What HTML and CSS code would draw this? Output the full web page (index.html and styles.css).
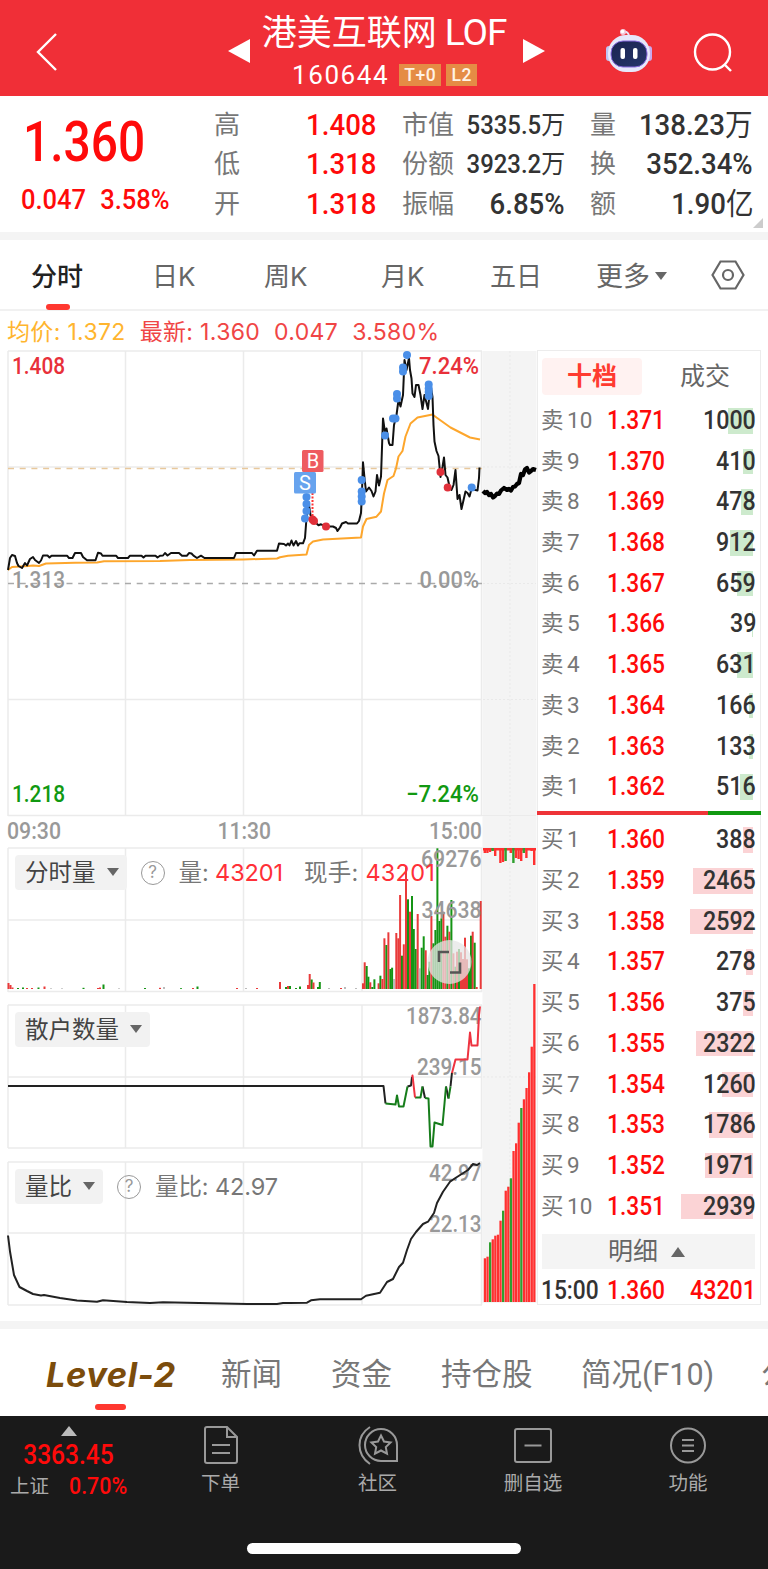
FILE: index.html
```html
<!DOCTYPE html>
<html lang="zh-CN">
<head>
  <meta charset="UTF-8" />
  <meta name="viewport" content="width=device-width, initial-scale=1.0"/>
  <title>港美互联网LOF 160644</title>
  <link rel="stylesheet" href="styles.css">
</head>
<body>
  <header class="topbar">
    <svg class="back" width="24" height="42" viewBox="0 0 24 42"><path d="M21 3 3 21 21 39"/></svg>
    <div class="stock">
      <svg class="arrow" width="22" height="24" viewBox="0 0 22 24"><path d="M22 0V24L0 12z"/></svg>
      <div class="stock-name">
        <h1>港美互联网<span>LOF</span></h1>
        <p><span class="code">160644</span><b class="badge">T+0</b><b class="badge">L2</b></p>
      </div>
      <svg class="arrow" width="22" height="24" viewBox="0 0 22 24"><path d="M0 0V24L22 12z"/></svg>
    </div>
    <svg class="robot" width="48" height="48" viewBox="0 0 48 48">
      <defs>
        <linearGradient id="face" x1="0" y1="0" x2="1" y2="1"><stop offset="0" stop-color="#1b2350"/><stop offset="1" stop-color="#25366b"/></linearGradient>
      </defs>
      <path d="M18 5Q24 4 24 10" fill="none" stroke="#e9e5f8" stroke-width="2"/>
      <circle cx="18" cy="5" r="3" fill="#f3c9dc"/>
      <circle cx="17.500" cy="4.500" r="1.800" fill="#fff"/>
      <rect x="1" y="19" width="6" height="15" rx="3" fill="#bfc6f5"/>
      <rect x="41" y="19" width="6" height="15" rx="3" fill="#c9a9ee"/>
      <rect x="3" y="8" width="42" height="37" rx="18" fill="#e6e8fb"/>
      <rect x="6" y="14" width="36" height="26" rx="12" fill="url(#face)" stroke="#8a6be0" stroke-width="1"/>
      <rect x="15.500" y="21" width="4.500" height="11" rx="2" fill="#fff"/>
      <rect x="28" y="21" width="4.500" height="11" rx="2" fill="#fff"/>
    </svg>
    <svg class="search" width="42" height="42" viewBox="0 0 42 42"><circle cx="20.500" cy="20" r="17.500"/><path d="M33 33l6 6"/></svg>
  </header>

  <section class="quote">
    <div class="quote-main">
      <strong>1.360</strong>
      <p><span>0.047</span><span>3.58%</span></p>
    </div>
    <dl class="stats s1">
      <div><dt>高</dt><dd class="up">1.408</dd></div>
      <div><dt>低</dt><dd class="up">1.318</dd></div>
      <div><dt>开</dt><dd class="up">1.318</dd></div>
    </dl>
    <dl class="stats s2">
      <div><dt>市值</dt><dd class="small">5335.5<i>万</i></dd></div>
      <div><dt>份额</dt><dd class="small">3923.2<i>万</i></dd></div>
      <div><dt>振幅</dt><dd>6.85%</dd></div>
    </dl>
    <dl class="stats s3">
      <div><dt>量</dt><dd>138.23<i>万</i></dd></div>
      <div><dt>换</dt><dd>352.34%</dd></div>
      <div><dt>额</dt><dd>1.90<i>亿</i></dd></div>
    </dl>
    <span class="corner"></span>
  </section>

  <nav class="periods">
    <a class="active">分时</a>
    <a>日K</a>
    <a>周K</a>
    <a>月K</a>
    <a>五日</a>
    <a>更多<span class="down"></span></a>
    <svg width="34" height="30" viewBox="0 0 34 30"><path d="M9.500 1.500h15L32.500 15l-8 13.500h-15L1.500 15z"/><circle cx="17" cy="15" r="5"/></svg>
  </nav>

  <p class="info"><span class="avg">均价: 1.372</span><span>最新: 1.360</span><span>0.047</span><span>3.580%</span></p>

  <main class="market">
    <div class="charts">
      <svg class="price" width="482" height="497" viewBox="0 350 482 497">
        <path class="grid" d="M8 351H482M8 467H482M8 699.500H482M8 815.500H482M8 351V816M125.500 351V816M243.500 351V816M362 351V816M481.500 351V816"/>
        <path class="dash last" d="M8 468.500H482"/>
        <path class="dash" d="M8 583.500H482"/>
        <polyline class="avg-line" points="8,570 12,567 28,566 33,565.500 39,566 46,563.500 75,562.700 97,562.500 104,561.300 160,561 190,560 243,559.500 277,558.500 280,557.300 288,555.700 306.500,554.500 309,545 313,541.500 323,539.500 361,537.500 363,526.500 366.500,519 376.500,516.700 381,511.500 384,493.500 387.500,480 393.500,476 396,468.500 398.500,456.500 402.500,451 405.500,436.500 410.500,423.500 417.500,417.500 432.500,414.500 436.500,417.500 450.500,427.500 470,437.500 480,439.500"/>
        <polyline class="line" points="8,570 10,558 12,555 15,556 17,563 18.500,566 22,568 25,563 27,565.500 30,559 33,557 35,560 39,563 41,560.500 43,555.500 47.500,555.500 49.500,557.500 51.500,555.700 67,555.700 69,558 72.500,558 75,553 81,553 83,557 87,560.300 95.500,560.300 98,552.700 101,553.500 102.500,555.700 116,555.700 118,558 128,558 130,555.700 141.500,555.700 143.500,557.500 145.500,555.700 155.500,555.700 157.500,557.500 160,555.700 163,555.500 165,553 167.500,555.500 171,553 179,553 182,555.700 187,555.700 189,553 191.500,553.500 193.500,555.700 197,558 201,555.700 204.500,558 234,558 236,553 252,553 254,555.500 257,550.700 277,550.700 279,543.500 284,544 286,545.500 288,543.500 289.500,545.500 291.500,540.500 293.500,545.500 296,541 298,545.500 299.500,543.300 303,543.300 305,538 306.500,518 308.500,502 310.500,515 313,519.300 316,523 318.500,525.300 321,524.300 326,526.500 333,526.500 336,528 337.500,531 340,527.500 342,523.500 346,522 348,523.500 357,523.500 359,521 361,513 362,491.500 363,462.300 364.500,478 366,491.500 369,487.500 371.500,491 373.500,496.500 375.500,491.500 377,475 379,485.500 381,476.500 383,418.500 385,432.500 386.500,428.500 389,443 390,445 392.500,445 394,425 396.500,415 398.500,400 400.500,406.500 403,395 404.500,360 406.500,370 409,358 410,370 411.500,378.500 412.500,393.500 414.500,397 416,385 418.500,385 420.500,395 422.500,409 424.500,395 428,409 430.500,385 432.500,397 433.500,425 434.500,441.500 436.500,451 438.500,456 440.500,477 442.500,467 444,457.500 445.500,475 447.500,477.500 449.500,486.500 451.500,490 453.500,485 455.500,470 457.500,499 459.500,495 461.500,509 464,498 465.500,491.500 467.500,493 469.500,496.500 471.500,489 477.500,490.500 479,478 479.500,467.500"/>
        <path d="M312.500 472V518" stroke="#f33" stroke-width="2" stroke-dasharray="2 1.500"/>
        <g id="trades"></g>
        <rect x="294" y="472" width="22" height="21.500" rx="1.500" fill="#67a3ee"/>
        <rect x="302" y="450" width="21.500" height="22" rx="1.500" fill="#ee5b60"/>
        <text class="flag" x="305" y="490">S</text>
        <text class="flag" x="313" y="468">B</text>
        <g class="num">
          <text class="up" x="12" y="374" textLength="53" lengthAdjust="spacingAndGlyphs">1.408</text>
          <text class="up" x="419" y="374" textLength="60" lengthAdjust="spacingAndGlyphs">7.24%</text>
          <text x="12" y="587.500" textLength="53" lengthAdjust="spacingAndGlyphs">1.313</text>
          <text x="419.500" y="587.500" textLength="59.500" lengthAdjust="spacingAndGlyphs">0.00%</text>
          <text class="dn" x="12" y="802" textLength="53" lengthAdjust="spacingAndGlyphs">1.218</text>
          <text class="dn" x="406" y="802" textLength="73" lengthAdjust="spacingAndGlyphs">−7.24%</text>
          <text x="7" y="839" textLength="54" lengthAdjust="spacingAndGlyphs">09:30</text>
          <text x="217.500" y="839" textLength="53.500" lengthAdjust="spacingAndGlyphs">11:30</text>
          <text x="429" y="839" textLength="53" lengthAdjust="spacingAndGlyphs">15:00</text>
        </g>
      </svg>

      <div class="panel">
        <svg width="482" height="145" viewBox="0 847 482 145">
          <path class="grid" d="M8 848H482M8 920H482M8 991.500H482M8 848V992M125.500 848V992M243.500 848V992M362 848V992M481.500 848V992"/>
          <g id="volume"></g>
          <g class="num">
            <text x="421" y="867" textLength="60.500" lengthAdjust="spacingAndGlyphs">69276</text>
            <text x="421.500" y="918" textLength="60" lengthAdjust="spacingAndGlyphs">34638</text>
          </g>
          <circle cx="449.500" cy="962" r="22" fill="#e6e6e6" fill-opacity=".75"/>
          <path d="M439 962V952H449M450 972.500H460V962.500" fill="none" stroke="#555" stroke-width="2.600"/>
        </svg>
        <div class="panel-head">
          <button>分时量<span class="down"></span></button>
          <span class="help">?</span>
          <span class="kv">量: <b>43201</b></span>
          <span class="kv second">现手: <b>43201</b></span>
        </div>
      </div>

      <div class="panel">
        <svg width="482" height="145" viewBox="0 1004 482 145">
          <path class="grid" d="M8 1005H482M8 1077H482M8 1148H482M8 1005V1148M125.500 1005V1148M243.500 1005V1148M362 1005V1148M481.500 1005V1148"/>
          <g class="num">
            <text x="406" y="1024" textLength="75.500" lengthAdjust="spacingAndGlyphs">1873.84</text>
            <text x="417" y="1074.500" textLength="64.500" lengthAdjust="spacingAndGlyphs">239.15</text>
          </g>
          <path class="line thin" d="M8 1086H383.500L385.500 1103.500M407.500 1086.500 411 1085.500 412 1077M422.500 1086.500 425 1098M446 1086.500 448.500 1098.500M450.500 1086.500 452 1072.500"/>
          <path class="line thin green" d="M385.500 1103.500 395.500 1104.500 397 1095.500 399 1106.500H403.500L407.500 1086.500M415 1097.500H420.500L422.500 1086.500M425 1098 428.500 1098.500 430.500 1146.500H432.500L434.500 1122.500 442.500 1125 444.500 1103.500 446 1086.500M448.500 1098.500 450.500 1086.500"/>
          <path class="line thin red" d="M412 1077 412.500 1075.500 415 1097.500M452 1073 455.500 1059.500H467.500L470 1032.500 471.500 1045.500H477.500L479 1015 480 1006.500"/>
        </svg>
        <div class="panel-head">
          <button>散户数量<span class="down"></span></button>
        </div>
      </div>

      <div class="panel">
        <svg width="482" height="145" viewBox="0 1161 482 145">
          <path class="grid" d="M8 1162H482M8 1233H482M8 1305H482M8 1162V1305M125.500 1162V1305M243.500 1162V1305M362 1162V1305M481.500 1162V1305"/>
          <g class="num">
            <text x="429" y="1180.500" textLength="52.500" lengthAdjust="spacingAndGlyphs">42.97</text>
            <text x="429" y="1231.500" textLength="52.500" lengthAdjust="spacingAndGlyphs">22.13</text>
          </g>
          <polyline class="line thin" points="8,1235.500 10,1251.500 14,1275 19.500,1287 27,1291 33,1294 41,1295.500 44,1295 60,1298 77,1300.500 97,1301.700 103,1300.300 127,1302 150,1303 163,1302.300 247,1304 277,1304 283,1303 290,1303 307,1302.700 311,1300.300 320,1299.300 361,1299.300 366,1295.700 380,1292.700 387,1282 393,1279 399,1267 403,1262.700 407,1250 411,1239 416,1232 423,1224 428,1221.700 434,1213 437,1203 443,1191.700 450,1181.700 457,1177 468,1170 473,1164 477,1165 480,1163"/>
        </svg>
        <div class="panel-head">
          <button>量比<span class="down"></span></button>
          <span class="help">?</span>
          <span class="kv">量比: 42.97</span>
        </div>
      </div>
    </div>

    <svg class="auction" width="55" height="956" viewBox="482 350 55 956">
      <rect x="482.500" y="351" width="54" height="952" fill="#f4f4f4"/>
      <path d="M510 351V1303M483 467H536M483 583.500H536M483 699.500H536M483 1077H536" stroke="#e9e9e9" stroke-dasharray="2 2"/>
      <path d="M482 815.500H536M482 848H536" stroke="#ebebeb"/>
      <polyline points="483,491 485,493 487,492 489,495 491,494 493,497.500 495,496 497,493.500 499,494 501,490.500 504,488 507,490 509,489 511,490.500 513,487 515,486.500 517,484 519,483 521,474 523,475 525,469.500 527,468 529,472.500 531,471 533,469 536,470" fill="none" stroke="#000" stroke-width="4.200" stroke-linejoin="round"/>
      <g id="auction"></g>
    </svg>

    <aside class="book">
      <div class="book-tabs"><a class="active">十档</a><a>成交</a></div>
      <div id="sells"></div>
      <div class="ratio"><i></i></div>
      <div id="buys"></div>
      <div class="detail">明细<span class="up-tri"></span></div>
      <div class="tick"><span>15:00</span><b>1.360</b><em><u>43201</u></em></div>
    </aside>
  </main>

  <nav class="sections">
    <a class="active">Level-2</a>
    <a>新闻</a>
    <a>资金</a>
    <a>持仓股</a>
    <a>简况(F10)</a>
    <a>公告</a>
  </nav>

  <footer>
    <div class="toolbar">
      <div class="index">
        <span class="up-tri"></span>
        <strong>3363.45</strong>
        <p>上证<b>0.70%</b></p>
      </div>
      <a>
        <svg width="40" height="40" viewBox="0 0 40 40"><path d="M6 2H26L36 12V36a2 2 0 0 1-2 2H6a2 2 0 0 1-2-2V4a2 2 0 0 1 2-2zM26 2V12H36M11 20H29M11 28H29"/></svg>
        下单
      </a>
      <a>
        <svg width="42" height="40" viewBox="0 0 42 40"><path d="M24 4a16 16 0 0 1 16 16V36H24a16 16 0 0 1 0-32z"/><path d="M13 2C-1 11-1 29 13 39"/><path d="M24 10.500l3 6 6.600 1-4.800 4.600 1.200 6.600-6-3.200-6 3.200 1.200-6.600-4.800-4.600 6.600-1z"/></svg>
        社区
      </a>
      <a>
        <svg width="40" height="40" viewBox="0 0 40 40"><rect x="2" y="4" width="36" height="33" rx="2"/><path d="M11.500 20.500H28.500"/></svg>
        删自选
      </a>
      <a>
        <svg width="40" height="40" viewBox="0 0 40 40"><circle cx="20" cy="20.500" r="17"/><path d="M14 15H26M14 20.500H26M14 26H26"/></svg>
        功能
      </a>
    </div>
    <div class="home-bar"></div>
  </footer>

  <script>
    const sells = [
      [10,'1.371',1000],[9,'1.370',410],[8,'1.369',478],[7,'1.368',912],[6,'1.367',659],
      [5,'1.366',39],[4,'1.365',631],[3,'1.364',166],[2,'1.363',133],[1,'1.362',516]
    ];
    const buys = [
      [1,'1.360',388],[2,'1.359',2465],[3,'1.358',2592],[4,'1.357',278],[5,'1.356',375],
      [6,'1.355',2322],[7,'1.354',1260],[8,'1.353',1786],[9,'1.352',1971],[10,'1.351',2939]
    ];

    function renderBook(id, label, rows) {
      document.getElementById(id).innerHTML = rows.map(r => `
        <div class="row ${id}">
          <span>${label} ${r[0]}</span>
          <b>${r[1]}</b>
          <em><i style="width:${(r[2] * 0.0242).toFixed(1)}px"></i><u>${r[2]}</u></em>
        </div>`).join('');
    }
    renderBook('sells', '卖', sells);
    renderBook('buys', '买', buys);

    // [x, top, colour]
    const colors = { r: '#e93a3a', g: '#149414', s: '#bbb' };
    const volume = [
      [8.5,983,'r'],[10.5,985,'r'],[12.5,987.5,'r'],[18,988,'g'],[23,987.5,'g'],[27,988,'r'],[32,988,'r'],[38.5,987.5,'g'],[44.5,986.5,'r'],
      [51,988.3,'s'],[62,988.3,'s'],[83.5,987.8,'g'],[98,988,'r'],[100,987.5,'r'],[103.5,984.5,'g'],[119,988.3,'s'],[145,988,'g'],[160,987.8,'r'],[164,987,'s'],
      [181,988.2,'g'],[193,988,'r'],[197.5,986.5,'g'],[237,988,'r'],[246,988,'s'],[257,988,'r'],[280,982,'r'],[286,987,'g'],[288,986,'r'],[290,986,'g'],[296,988,'g'],[300,986.5,'g'],
      [308,985,'r'],[309.7,974,'r'],[311.7,979.5,'g'],[313.5,982.5,'r'],[318,987,'g'],[319.8,982,'g'],[329,988,'s'],[341,988,'r'],[345,987,'s'],[356,988,'s'],
      [363,983.3,'r'],[364.7,962.3,'r'],[366.7,966,'g'],[368.4,976.7,'g'],[370.3,982.3,'r'],[372.3,987,'g'],[374.4,979.3,'g'],[378.6,983.3,'r'],[380.4,975.7,'g'],[382.4,979,'r'],
      [384.4,938.3,'r'],[386.4,945,'g'],[388.4,932.3,'r'],[390.4,969,'g'],[392.1,967.7,'g'],[394,979,'s'],[396.3,933,'r'],[398.3,938.3,'r'],[400.1,895,'r'],[402,955.7,'g'],
      [403.8,944.3,'r'],[406,866.7,'r'],[408,899.3,'g'],[410,911.7,'r'],[412,896,'g'],[413.8,929,'g'],[415.7,949,'g'],[417.7,914,'r'],[419.7,968.3,'s'],[421.7,947.7,'g'],
      [423.7,936.3,'g'],[425.7,950.3,'r'],[427.7,975,'g'],[429.4,961.7,'g'],[431.4,916,'r'],[433.4,943.3,'g'],[435.4,930,'g'],[437.4,848.3,'g'],[439.4,921,'g'],[441.4,918.3,'g'],
      [443.4,911.7,'r'],[445.4,936.7,'r'],[447.4,925.7,'g'],[449.4,931.7,'r'],[451.4,900,'g'],[453.4,953.3,'r'],[455.4,966.7,'g'],[457,951.7,'r'],[459,949,'g'],[461,952.3,'r'],
      [463,959,'r'],[465,937.7,'r'],[467,959.3,'r'],[469,968.3,'g'],[471,935.7,'g'],[472.7,931.7,'r'],[474.7,942.7,'g'],[476.7,987,'r'],[480.7,901,'r']
    ];
    document.getElementById('volume').innerHTML = volume.map(v =>
      `<rect x="${v[0] - 1}" y="${v[1]}" width="2" height="${989 - v[1]}" fill="${colors[v[2]]}"/>`).join('');

    // last minutes: order imbalance hangs from the top, matched volume stands on the base
    const imbalance = [5,5,4,3,8,1,15,14,13,1,5,15,10,11,13,5,10,2,3,17];
    const matched = [1258.3,1256.7,1242.3,1239.3,1235.7,1234.7,1220.7,1210.7,1190.7,1186.7,1178.3,1151,1143.3,1122.7,1108,1099.3,1088,1072.3,1046.7,984];
    const greenTop = [3,8,11,15];
    const greenBase = [2,7,10,14];
    let bars = '<rect x="483" y="848" width="53" height="2.5" fill="#ff3030"/>';
    imbalance.forEach((h, i) => {
      const x = 483.6 + i * 2.6;
      bars += `<rect x="${x}" y="848" width="2.4" height="${h}" fill="${greenTop.includes(i) ? '#2fa02f' : '#ff3030'}"/>`;
    });
    matched.forEach((y, i) => {
      const x = 483.8 + i * 2.6;
      bars += `<rect x="${x}" y="${y}" width="2.3" height="${1302 - y}" fill="${greenBase.includes(i) ? '#2fa02f' : '#ff3030'}"/>`;
    });
    document.getElementById('auction').innerHTML = bars;

    const sold = [[407,355],[403,367.5],[403,371.5],[397,394],[397,398.5],[395.5,418.5],[393,418.5],[385,435.5],[428.7,384.5],[428.7,388.5],[428.7,392],[428.7,396],
      [361.7,480],[361.7,491.5],[361.7,496.5],[361.7,501.5],[306.5,497],[306.5,504],[306.5,511],[305,518.5],[471.7,487.5]];
    const bought = [[312.5,519.5],[314,521],[326,526.5],[440.5,472],[447.7,487.5]];
    document.getElementById('trades').innerHTML =
      sold.map(p => `<circle cx="${p[0]}" cy="${p[1]}" r="4" fill="#4a8fe8"/>`).join('') +
      bought.map(p => `<circle cx="${p[0]}" cy="${p[1]}" r="4" fill="#e0303a"/>`).join('');
  </script>
</body>
</html>
```
FILE: styles.css
```css
:root {
  --red: #f02f37;
  --up: #ff0a0a;
  --down: #119911;
  --text: #333;
  --muted: #777;
  --num: Roboto, "Noto Sans CJK SC", sans-serif;
}
*, *::before, *::after { box-sizing: border-box; margin: 0; padding: 0; }
body { width: 768px; height: 1569px; overflow: hidden; background: #fff; color: var(--text); font-family: Inter, "Noto Sans CJK SC", sans-serif; }
i, em { font-style: normal; }
u { text-decoration: none; }
svg { display: block; flex: none; overflow: visible; }

/* Top bar */
.topbar { display: flex; height: 96px; padding-left: 35px; background: var(--red); color: #fff; }
.back { margin-top: 31px; fill: none; stroke: #fff; stroke-width: 2.4; }
.stock { display: flex; width: 317px; margin-left: 169px; justify-content: space-between; }
.arrow { margin-top: 39px; fill: #fff; }
.stock-name { flex: 1; text-align: center; white-space: nowrap; }
.stock-name h1 { height: 60px; padding-right: 5px; line-height: 64px; font-size: 35px; font-weight: 400; }
.stock-name h1 span { margin-left: 8px; font-family: Roboto, sans-serif; font-size: 37px; letter-spacing: -1px; }
.stock-name p { display: flex; height: 30px; padding-left: 1px; justify-content: center; align-items: center; }
.code { margin-right: 10px; font-size: 26px; font-family: Roboto, sans-serif; letter-spacing: 1.6px; }
.badge { height: 22px; margin-right: 5px; padding: 0 5px; background: #e58c45; color: #fff3e6; font: 500 17.5px/22px Roboto, sans-serif; letter-spacing: .6px; }
.robot { margin-top: 27px; margin-left: 60px; }
.search { margin-top: 32px; margin-left: 39px; fill: none; stroke: #fff; stroke-width: 2.4; }

/* Quote */
.quote { display: flex; position: relative; height: 144px; padding: 9px 0 0 21px; border-bottom: 8px solid #f4f4f4; font-family: var(--num); }
.quote-main { width: 193px; color: var(--up); }
.quote-main strong { display: block; height: 75px; margin-left: 2px; font-size: 55px; line-height: 74px; font-weight: 500; transform: scaleX(.87); transform-origin: left; }
.quote-main p { display: flex; gap: 15px; font-size: 27px; line-height: 41px; font-weight: 500; transform: scaleX(.945); transform-origin: left; }
.stats > div { display: flex; height: 39.3px; justify-content: space-between; line-height: 40px; white-space: nowrap; }
.stats dt { color: var(--muted); font-size: 26px; }
.stats dd { margin-right: -1px; font-size: 30px; font-weight: 500; transform: scaleX(.92); transform-origin: right; }
.stats dd i { font-weight: 400; }
.stats .small { font-size: 26px; }
.stats .up { color: var(--up); }
.s1 { width: 162px; margin-right: 26px; }
.s2 { width: 162px; margin-right: 26px; }
.s3 { width: 162px; }
.corner { position: absolute; right: 5px; bottom: 4px; border: solid transparent; border-width: 10px 0 0 10px; border-right: 0; border-top: 0; border-bottom: 10px solid #ccc; }

/* Periods */
.periods { display: flex; height: 71px; padding-left: 31px; border-bottom: 2px solid #f1f1f1; color: #666; font-size: 26px; line-height: 74px; white-space: nowrap; }
.periods a { position: relative; }
.periods a:nth-child(1) { width: 121px; }
.periods a:nth-child(2) { width: 112px; }
.periods a:nth-child(3) { width: 117px; }
.periods a:nth-child(4) { width: 109px; }
.periods a:nth-child(5) { width: 106px; }
.periods a:nth-child(6) { width: 115px; font-size: 27px; }
.periods .active { color: #222; font-weight: 500; }
.periods .active::after { content: ''; position: absolute; left: 15px; bottom: -1px; width: 24px; height: 6px; border-radius: 3px; background: #ff3830; }
.periods svg { margin-top: 20px; fill: none; stroke: #666; stroke-width: 2.2; }
.down { display: inline-block; border: 6px solid transparent; border-top: 8px solid #666; border-bottom: 0; }
.periods .down { margin-left: 5px; vertical-align: 6px; }

.info { display: flex; height: 39px; gap: 14px; padding-left: 7px; color: #f04545; font-size: 23px; line-height: 42px; letter-spacing: .33px; }
.info .avg { color: #ffb52e; }

/* Charts */
.market { display: flex; height: 956px; }
.charts { width: 482px; }
.panel { position: relative; height: 145px; margin-bottom: 12px; }
.grid { fill: none; stroke: #ebebeb; stroke-width: 1.5; }
.dash { stroke: #aaa; stroke-width: 1.3; stroke-dasharray: 6 5.7; }
.dash.last { stroke: #e8c89c; }
.line { fill: none; stroke: #111; stroke-width: 2; stroke-linejoin: round; }
.line.thin { stroke: #222; stroke-width: 2; }
.line.green { stroke: #167d1b; }
.line.red { stroke: #ee3340; }
.avg-line { fill: none; stroke: #fda62c; stroke-width: 2; stroke-linejoin: round; }
.num text { font: 500 23px Roboto, sans-serif; fill: #999; }
.num .up { fill: #e8303a; }
.num .dn { fill: #119911; }
.flag { fill: #fff; font: 20px Roboto, sans-serif; text-anchor: middle; }
.panel-head { position: absolute; top: 8px; left: 15px; display: flex; align-items: center; height: 35px; color: var(--muted); font-size: 23.5px; white-space: nowrap; }
.panel-head button { height: 35px; padding: 0 8px 0 10px; border: 0; border-radius: 4px; background: #f2f2f2; color: #444; font: inherit; line-height: 35px; }
.panel-head .down { margin-left: 11px; vertical-align: 5px; }
.help { width: 24px; height: 24px; margin-left: 14px; border: 1.6px solid #999; border-radius: 50%; color: #999; font-size: 17px; line-height: 21px; text-align: center; }
.kv { margin-left: 14px; line-height: 34px; letter-spacing: -.1px; }
.kv b { color: #ff3038; font-weight: 400; }
.kv.second { margin-left: 21px; letter-spacing: .25px; }

/* Order book */
.book { width: 224px; height: 955px; padding-top: 7px; border: 1.5px solid #ececec; font-family: var(--num); }
.book-tabs { display: flex; height: 37px; margin: 0 4px 5px; font-size: 25px; line-height: 37px; text-align: center; color: #666; }
.book-tabs a { flex: none; width: 100px; }
.book-tabs a + a { width: 113px; padding-left: 13px; }
.book-tabs .active { border-radius: 4px; background: #fff2f1; color: #ff3b30; font-weight: 700; }
.row, .tick { display: flex; height: 40.7px; padding: 0 4px 0 3px; line-height: 42px; font-size: 25px; white-space: nowrap; }
.row span { width: 66px; color: var(--muted); font-size: 22.5px; line-height: 41px; word-spacing: -2px; }
.row b, .tick b { width: 70px; color: var(--up); font-weight: 500; transform: scaleX(.91); transform-origin: left; }
.row em, .tick em { position: relative; flex: 1; text-align: right; font-weight: 500; }
.book u { position: relative; display: inline-block; transform: scaleX(.93); transform-origin: right; }
.row em i { position: absolute; top: 8px; right: 3.5px; height: 25.5px; }
.sells em i { background: #cdeacd; }
.buys em i { background: #fbd3d5; }
.ratio { height: 3.5px; margin: 4.5px -1px; background: #119911; }
.ratio i { display: block; width: 171px; height: 100%; background: #ee3338; }
.detail { height: 35px; margin: 8px 5px 0 4px; background: #f4f4f4; color: #666; font-size: 25px; line-height: 36px; padding-right: 4px; text-align: center; }
.up-tri { display: inline-block; border: 7px solid transparent; border-top: 0; border-bottom: 10px solid #666; }
.detail .up-tri { margin-left: 13px; vertical-align: 3px; }
.tick { height: 36px; line-height: 43px; }
.tick span { width: 66px; font-weight: 500; transform: scaleX(.91); transform-origin: left; }
.tick em { color: var(--up); }

/* Sections */
.sections { display: flex; height: 110px; padding: 7px 0 0 46px; color: var(--muted); font-size: 30.5px; line-height: 92px; white-space: nowrap; overflow: hidden; position: relative; }
.sections::before { content: ''; position: absolute; left: 0; right: 0; top: 15px; height: 8px; background: #f4f4f4; }
.sections a { flex: none; position: relative; padding-top: 16px; font-family: var(--num); }
.sections a:nth-child(1) { width: 175px; }
.sections a:nth-child(2) { width: 110px; }
.sections a:nth-child(3) { width: 110px; }
.sections a:nth-child(4) { width: 140px; }
.sections a:nth-child(5) { width: 180px; }
.sections .active { color: #7b4c0c; font: italic 700 34.5px/91px Inter, sans-serif; letter-spacing: .5px; }
.sections .active::after { content: ''; position: absolute; left: 49px; top: 91px; width: 31px; height: 6px; border-radius: 3px; background: #ff3830; }

/* Footer */
footer { height: 154px; background: #1a1a1a; color: #aaa; }
.toolbar { display: flex; height: 127px; padding-top: 9px; }
.index { width: 137px; font-family: var(--num); text-align: center; }
.index .up-tri { display: block; width: 16px; margin: 1px auto 0; border-width: 0 8px 10px; border-bottom-color: #bbb; }
.index strong { display: block; height: 34px; margin-top: 2px; color: var(--up); font-size: 27px; line-height: 35px; font-weight: 500; transform: scaleX(.91); }
.index p { display: flex; padding-left: 10px; gap: 20px; font-size: 19.5px; line-height: 30px; }
.index b { color: var(--up); font-size: 23px; font-weight: 500; transform: scaleX(.93); transform-origin: left; }
.toolbar a { display: flex; flex-direction: column; align-items: center; font-size: 19.5px; line-height: 36px; }
.toolbar a:nth-child(2) { width: 167px; }
.toolbar a:nth-child(3) { width: 147px; }
.toolbar a:nth-child(4) { width: 164px; }
.toolbar a:nth-child(5) { width: 146px; }
.toolbar a svg { fill: none; stroke: #999; stroke-width: 2; }
.home-bar { width: 274px; height: 11px; margin: 0 auto; border-radius: 6px; background: #fff; }
```
